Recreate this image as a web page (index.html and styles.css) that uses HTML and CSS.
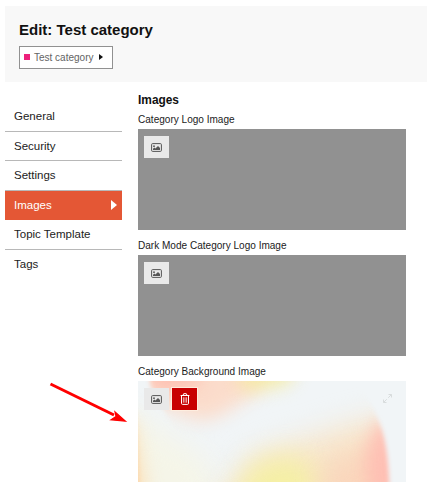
FILE: index.html
```html
<!DOCTYPE html>
<html lang="en">
<head>
    <meta charset="UTF-8">
    <meta name="viewport" content="width=device-width, initial-scale=1.0">
    <title>Edit: Test category</title>
    <link rel="stylesheet" href="styles.css">
</head>
<body>
    <svg class="symbols" width="0" height="0">
        <symbol id="icon-image" viewBox="0 0 11 9">
            <rect x="0.6" y="0.6" width="9.8" height="7.8" rx="1" fill="none" stroke="currentColor" stroke-width="1"/>
            <circle cx="3" cy="3.2" r="0.9" fill="currentColor"/>
            <path d="M2 7V5.8L3.4 4.6L4.4 5.5L7 3.1L9 5.1V7Z" fill="currentColor"/>
        </symbol>
        <symbol id="icon-trash" viewBox="0 0 10 12">
            <path d="M0.6 2.5H9.4M3 2.3L3.7 0.7H6.3L7 2.3M1.5 2.7V10.3Q1.5 11.4 2.5 11.4H7.5Q8.5 11.4 8.5 10.3V2.7" fill="none" stroke="currentColor" stroke-width="1"/>
            <path d="M3.4 4.3V9.7M5 4.3V9.7M6.6 4.3V9.7" fill="none" stroke="currentColor" stroke-width="0.7"/>
        </symbol>
    </svg>

    <header class="edit-header">
        <h1>Edit: Test category</h1>
        <button class="category-chooser">
            <span class="badge"></span>
            <span>Test category</span>
            <span class="caret"></span>
        </button>
    </header>

    <div class="edit-body">
        <nav class="tabs">
            <a class="tab">General</a>
            <a class="tab">Security</a>
            <a class="tab">Settings</a>
            <a class="tab active">Images</a>
            <a class="tab">Topic Template</a>
            <a class="tab">Tags</a>
        </nav>

        <main class="images">
            <h2>Images</h2>
            <section class="field">
                <label>Category Logo Image</label>
                <div class="preview">
                    <button class="btn"><svg class="image-icon"><use href="#icon-image"/></svg></button>
                </div>
            </section>
            <section class="field">
                <label>Dark Mode Category Logo Image</label>
                <div class="preview">
                    <button class="btn"><svg class="image-icon"><use href="#icon-image"/></svg></button>
                </div>
            </section>
            <section class="field">
                <label>Category Background Image</label>
                <div class="preview has-image">
                    <svg class="artwork" viewBox="0 0 268 101" preserveAspectRatio="none">
                        <defs>
                            <filter id="soft" filterUnits="userSpaceOnUse" x="-100" y="-100" width="470" height="300" color-interpolation-filters="sRGB"><feGaussianBlur stdDeviation="14"/></filter>
                            <filter id="mid" filterUnits="userSpaceOnUse" x="-100" y="-100" width="470" height="300" color-interpolation-filters="sRGB"><feGaussianBlur stdDeviation="9"/></filter>
                            <filter id="edge" filterUnits="userSpaceOnUse" x="-100" y="-100" width="470" height="300"><feGaussianBlur stdDeviation="2"/></filter>
                            <mask id="curve" maskUnits="userSpaceOnUse" x="0" y="0" width="268" height="101">
                                <path d="M-60 -20H205Q230 14 240 38Q254 68 251 145H-60Z" fill="#fff" filter="url(#edge)"/>
                            </mask>
                            <mask id="corner" maskUnits="userSpaceOnUse" x="0" y="0" width="268" height="101">
                                <path d="M10 -30H320V140H90Q36 50 12 4Z" fill="#fff" filter="url(#edge)"/>
                            </mask>
                        </defs>
                        <rect width="268" height="101" fill="#f1f5f7"/>
                        <path d="M-40 20L10 40L70 80L90 150H-40Z" fill="#f5f5e8" filter="url(#soft)"/>
                        <path d="M-40 30L-4 40Q2 75 14 140H-40Z" fill="#fcdcae" filter="url(#mid)" opacity="0.8"/>
                        <path d="M-30 30H-3Q0 70 3 130H-30Z" fill="#ffd0a0" filter="url(#edge)" opacity="0.6"/>
                        <g mask="url(#corner)">
                            <path d="M-40 -60H150L120 10L84 34L62 40L-10 14Z" fill="#fbdccb" filter="url(#mid)"/>
                            <path d="M-20 -60H70L60 4L20 12Z" fill="#ffb9ac" filter="url(#mid)" opacity="0.8"/>
                            <path d="M92 -60H180L150 4L105 11Z" fill="#f5eb9f" filter="url(#mid)" opacity="0.85"/>
                        </g>
                        <g mask="url(#curve)">
                            <path d="M50 160L115 74L215 42L270 30V160Z" fill="#f7e6cc" filter="url(#soft)"/>
                            <path d="M80 160L112 86L150 74L180 90V160Z" fill="#f5f0a4" filter="url(#soft)"/>
                            <path d="M180 160L185 85L222 66H270V160Z" fill="#fbd2b8" filter="url(#soft)" opacity="0.8"/>
                            <ellipse cx="248" cy="84" rx="20" ry="44" fill="#ffbdb3" filter="url(#mid)" opacity="0.9"/>
                        </g>
                    </svg>
                    <button class="btn"><svg class="image-icon"><use href="#icon-image"/></svg></button>
                    <button class="btn btn-danger"><svg class="trash-icon"><use href="#icon-trash"/></svg></button>
                    <svg class="expand-icon" viewBox="0 0 9 9">
                        <path d="M5.5 0.5H8.5V3.5M8.5 0.5L5.2 3.8M3.5 8.5H0.5V5.5M0.5 8.5L3.8 5.2" fill="none" stroke="currentColor"/>
                    </svg>
                </div>
            </section>
        </main>
    </div>

    <!-- pointer to the background image field -->
    <svg class="arrow" viewBox="0 0 80 42">
        <path d="M1.5 3L65 34" stroke="#f00" stroke-width="3"/>
        <path d="M76.5 40.2L62 38.8L67 35.5L66 30.8Z" fill="#f00" stroke="#f00" stroke-width="1.2"/>
    </svg>
</body>
</html>
```
FILE: styles.css
```css
* {
    box-sizing: border-box;
}

body {
    position: relative;
    height: 499px;
    margin: 0;
    padding: 6px 0 0 5px;
    font-family: "Liberation Sans", Arial, sans-serif;
    background-color: #fff;
    color: #222;
    overflow: hidden;
}

h1, h2 {
    margin: 0;
    color: #111;
}

button {
    border: none;
    padding: 0;
    font-family: inherit;
}

.symbols {
    position: absolute;
}

.edit-header {
    height: 76px;
    padding: 15px 0 0 14px;
    background-color: #f8f8f8;
}

.edit-header h1 {
    font-size: 15px;
    line-height: 18px;
}

.category-chooser {
    display: flex;
    align-items: center;
    width: 94px;
    height: 23px;
    margin-top: 6.5px;
    padding-left: 4px;
    border: 1px solid #919191;
    background-color: #fff;
    font-size: 10px;
    color: #646464;
}

.badge {
    width: 6px;
    height: 6px;
    margin-right: 4px;
    background-color: #ed207b;
}

.caret {
    margin-left: 6px;
    border: 3.5px solid transparent;
    border-left: 4px solid #111;
    border-right: none;
}

.edit-body {
    display: flex;
}

.tabs {
    width: 117px;
    margin-top: 20px;
}

.tab {
    display: flex;
    align-items: center;
    justify-content: space-between;
    height: 29.5px;
    padding: 0 5px 0 9px;
    border-bottom: 1px solid #b8b8b8;
    font-size: 11.5px;
}

.tab:last-child {
    border-bottom: none;
}

.tab.active {
    border-color: #e45735;
    background-color: #e45735;
    color: #fff;
}

.tab.active::after {
    content: "";
    border: 5.5px solid transparent;
    border-left: 6px solid #fff;
    border-right: none;
}

.images {
    width: 268px;
    margin: 11px 0 0 16px;
}

.images h2 {
    font-size: 11.9px;
    line-height: 14px;
}

.field {
    margin-bottom: 7px;
}

.field label {
    display: block;
    height: 18px;
    font-size: 10.05px;
    line-height: 18px;
}

.images h2 + .field label {
    height: 22px;
    padding-top: 4px;
}

.preview {
    position: relative;
    display: flex;
    gap: 3px;
    height: 101px;
    padding: 7px 6px;
    background-color: #919191;
}

.preview.has-image {
    background-color: #f0f5f6;
}

.artwork {
    position: absolute;
    top: 0;
    left: 0;
    width: 100%;
    height: 100%;
}

.btn {
    position: relative;
    display: flex;
    align-items: center;
    justify-content: center;
    width: 25px;
    height: 22px;
    background-color: #e9e9e9;
    color: #555;
}

.btn-danger {
    background-color: #c80001;
    box-shadow: 0 0 0 1px rgba(255, 240, 225, 0.8);
    color: #fff;
}

.image-icon {
    width: 11px;
    height: 9px;
}

.trash-icon {
    width: 10px;
    height: 12px;
}

.expand-icon {
    position: relative;
    width: 9px;
    height: 9px;
    margin: 6px 8px 0 auto;
    color: #d8dcdd;
}

.arrow {
    position: absolute;
    top: 381px;
    left: 49px;
    width: 80px;
    height: 42px;
}
```
